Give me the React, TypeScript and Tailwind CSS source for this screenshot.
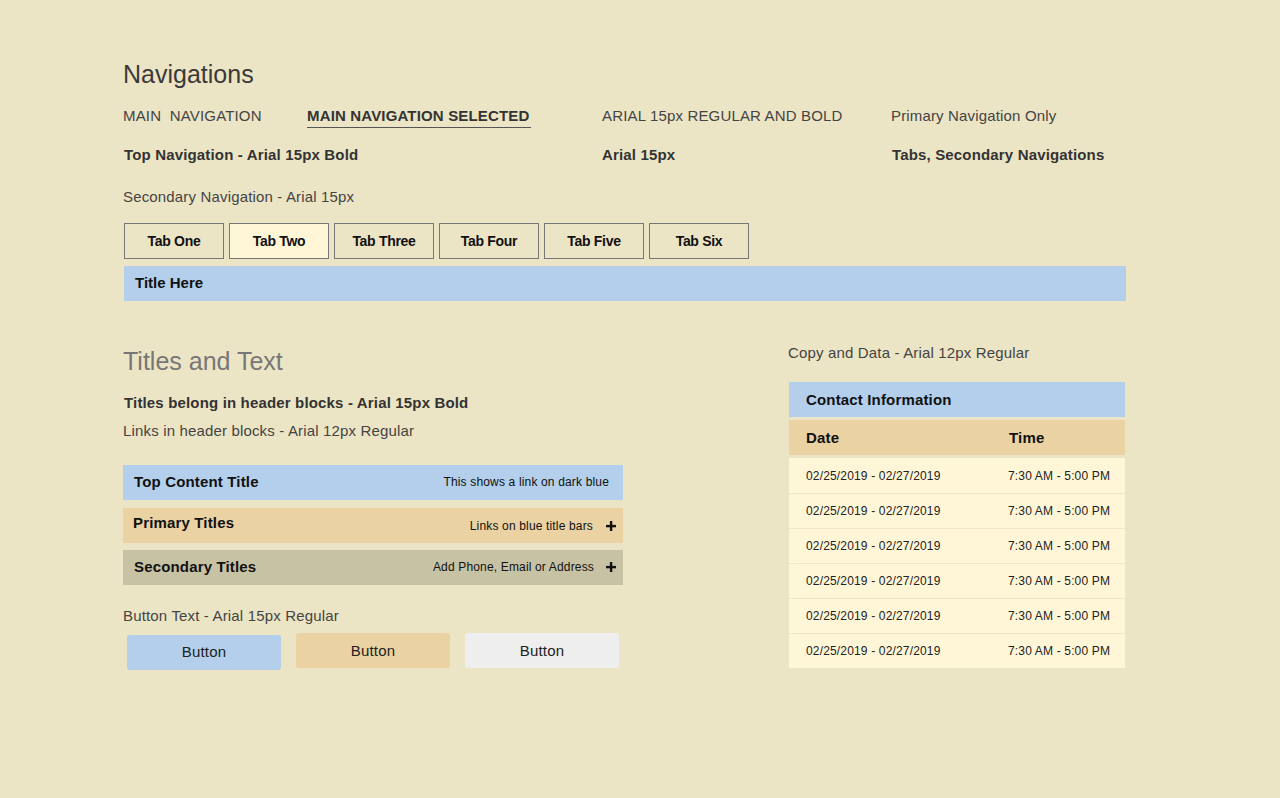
import { Fragment } from "react";

const tabs = ["Tab One", "Tab Two", "Tab Three", "Tab Four", "Tab Five", "Tab Six"];

const rows = [1, 2, 3, 4, 5, 6];

function Plus() {
  return (
    <svg width="10" height="10" viewBox="0 0 10 10" className="shrink-0">
      <rect x="3.9" y="0" width="2.4" height="10" fill="#111" />
      <rect x="0" y="3.9" width="10" height="2.4" fill="#111" />
    </svg>
  );
}

export default function App() {
  return (
    <div className="min-h-screen bg-[#ece5c5] font-['Liberation_Sans',Arial,sans-serif] tracking-[0.01em] text-[#333]">
      <div className="pl-[123px] pt-[60px]">
        {/* NAVIGATIONS */}
        <h1 className="text-[25px] leading-[29px] tracking-normal text-[#3a3a3a]">Navigations</h1>

        <div className="flex mt-[18px] h-[18px] text-[15px] leading-[18px] text-[#444]">
          <div className="w-[184px] whitespace-pre">MAIN  NAVIGATION</div>
          <div className="w-[295px]">
            <span className="inline-block font-bold text-[#333] border-b border-[#555] pb-[2px] pr-[2px]">
              MAIN NAVIGATION SELECTED
            </span>
          </div>
          <div className="w-[289px]">ARIAL 15px REGULAR AND BOLD</div>
          <div>Primary Navigation Only</div>
        </div>

        <div className="flex mt-[21px] h-[18px] text-[15px] leading-[18px] font-bold text-[#333]">
          <div className="w-[479px] pl-[1px]">Top Navigation - Arial 15px Bold</div>
          <div className="w-[289px]">Arial 15px</div>
          <div className="pl-[1px]">Tabs, Secondary Navigations</div>
        </div>

        <p className="mt-[24px] text-[15px] leading-[18px] text-[#444]">Secondary Navigation - Arial 15px</p>

        <div className="flex gap-[5px] mt-[17px] ml-[1px]">
          {tabs.map((tab, i) => (
            <div
              key={tab}
              className={`w-[100px] h-[36px] border border-[#777] flex items-center justify-center ${
                i === 1 ? "bg-[#fff6d8]" : "bg-[#ece5c5]"
              }`}
            >
              <span className="text-[14px] font-bold tracking-[-0.3px] text-[#111]">{tab}</span>
            </div>
          ))}
        </div>

        <div className="mt-[7px] ml-[1px] w-[1002px] h-[35px] bg-[#b3cfeb] flex items-center pl-[11px] text-[15px] font-bold tracking-normal text-[#111]">
          Title Here
        </div>

        {/* LOWER SECTION */}
        <div className="flex mt-[43px]">
          <div className="w-[500px]">
            <h2 className="mt-[3px] text-[25px] leading-[28px] tracking-normal text-[#777]">Titles and Text</h2>
            <p className="mt-[19px] pl-[1px] text-[15px] leading-[18px] font-bold text-[#333]">
              Titles belong in header blocks - Arial 15px Bold
            </p>
            <p className="mt-[10px] text-[15px] leading-[18px] text-[#444]">Links in header blocks - Arial 12px Regular</p>

            <div className="mt-[25px] h-[35px] bg-[#b3cfeb] flex items-center justify-between pl-[11px] pr-[14px] text-[#111]">
              <span className="text-[15px] font-bold">Top Content Title</span>
              <span className="text-[12px] mb-[2px]">This shows a link on dark blue</span>
            </div>
            <div className="mt-[8px] h-[35px] bg-[#ead2a3] flex items-center pl-[10px] pr-[7px] text-[#111]">
              <span className="text-[15px] font-bold mb-[5px]">Primary Titles</span>
              <span className="ml-auto text-[12px]">Links on blue title bars</span>
              <span className="ml-[13px]">
                <Plus />
              </span>
            </div>
            <div className="mt-[7px] h-[35px] bg-[#c8c2a5] flex items-center pl-[11px] pr-[7px] text-[#111]">
              <span className="text-[15px] font-bold">Secondary Titles</span>
              <span className="ml-auto text-[12px] mb-[2px]">Add Phone, Email or Address</span>
              <span className="ml-[12px] mb-[2px]">
                <Plus />
              </span>
            </div>

            <p className="mt-[22px] text-[15px] leading-[18px] text-[#444]">Button Text - Arial 15px Regular</p>
            <div className="flex items-start gap-[15px] mt-[8px] ml-[4px]">
              <button className="w-[154px] h-[35px] mt-[2px] rounded-[3px] bg-[#b3cfeb] text-[15px] text-[#222]">Button</button>
              <button className="w-[154px] h-[35px] rounded-[3px] bg-[#ead2a3] text-[15px] text-[#222] pt-[2px]">Button</button>
              <button className="w-[154px] h-[35px] rounded-[3px] bg-[#eeeeee] text-[15px] text-[#222] pt-[2px]">Button</button>
            </div>
          </div>

          {/* COPY AND DATA */}
          <div className="ml-[165px] w-[338px]">
            <p className="text-[15px] leading-[18px] text-[#444]">Copy and Data - Arial 12px Regular</p>
            <div className="mt-[20px] ml-[1px] w-[336px]">
              <div className="h-[35px] bg-[#b3cfeb] flex items-center pl-[17px] pt-[1px] text-[15px] font-bold text-[#111]">
                Contact Information
              </div>
              <div className="mt-[3px] h-[35px] pt-[2px] bg-[#ead2a3] grid grid-cols-[220px_1fr] items-center text-[15px] font-bold text-[#111]">
                <span className="pl-[17px]">Date</span>
                <span>Time</span>
              </div>
              <div className="mt-[3px] bg-[#fff6d8]">
                {rows.map((r, i) => (
                  <Fragment key={r}>
                    {i > 0 && <div className="h-px bg-[#efe7c7]" />}
                    <div
                      className={`grid grid-cols-[219px_1fr] items-center text-[12px] text-[#222] ${
                        i > 0 ? "h-[34px]" : "h-[35px]"
                      }`}
                    >
                      <span className="pl-[17px]">02/25/2019 - 02/27/2019</span>
                      <span>7:30 AM - 5:00 PM</span>
                    </div>
                  </Fragment>
                ))}
              </div>
            </div>
          </div>
        </div>
      </div>
    </div>
  );
}
